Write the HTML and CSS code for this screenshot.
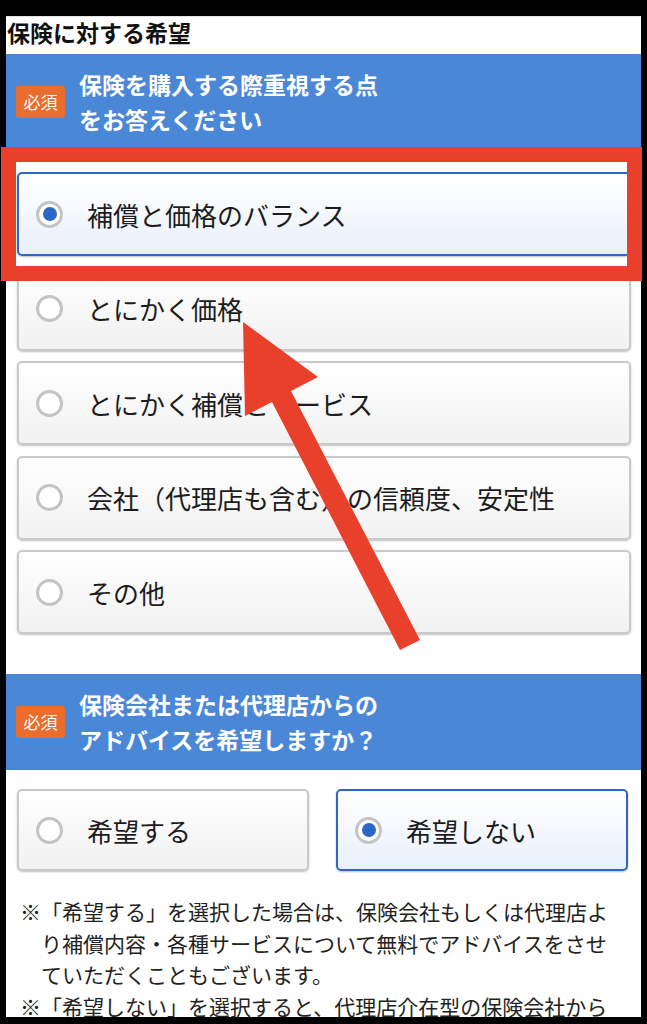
FILE: index.html
```html
<!DOCTYPE html>
<html lang="ja">
<head>
  <meta charset="UTF-8" />
  <meta name="viewport" content="width=device-width, initial-scale=1.0" />
  <title>保険に対する希望</title>
  <link rel="stylesheet" href="styles.css">
</head>
<body>
  <div class="screen">
    <h1 class="page-title">保険に対する希望</h1>

    <div class="question">
      <span class="badge">必須</span>
      <p class="question-text">保険を購入する際重視する点<br>をお答えください</p>
    </div>

    <div class="options">
      <label class="choice selected"><span class="radio"></span>補償と価格のバランス</label>
      <label class="choice"><span class="radio"></span>とにかく価格</label>
      <label class="choice"><span class="radio"></span>とにかく補償とサービス</label>
      <label class="choice"><span class="radio"></span>会社（代理店も含む）の信頼度、安定性</label>
      <label class="choice"><span class="radio"></span>その他</label>
    </div>

    <div class="question second">
      <span class="badge">必須</span>
      <p class="question-text">保険会社または代理店からの<br>アドバイスを希望しますか？</p>
    </div>

    <div class="pair">
      <label class="choice"><span class="radio"></span>希望する</label>
      <label class="choice selected"><span class="radio"></span>希望しない</label>
    </div>

    <div class="notes">
      <div class="note"><span class="mark">※</span><p>「希望する」を選択した場合は、保険会社もしくは代理店よ<br>り補償内容・各種サービスについて無料でアドバイスをさせ<br>ていただくこともございます。</p></div>
      <div class="note"><span class="mark">※</span><p>「希望しない」を選択すると、代理店介在型の保険会社から</p></div>
    </div>
  </div>

  <!-- 注釈（赤枠と矢印） -->
  <svg class="overlay" width="647" height="1024" viewBox="0 0 647 1024">
    <rect x="8.5" y="154.5" width="626" height="119" fill="none" stroke="#e8402a" stroke-width="15" />
    <polygon fill="#e8402a" points="243,322 318,377 291,391 420,640 400,650 272,402 245,416" />
  </svg>
</body>
</html>
```

FILE: styles.css
```css
body {
  margin: 0;
  background: #000;
  font-family: "Noto Sans CJK JP", sans-serif;
  color: #1c1c1c;
}
.screen {
  margin: 16px 6px 0;
  height: 1001px;
  overflow: hidden;
  background: #fff;
  border-top: 1px solid #e4e4e4;
  box-sizing: border-box;
}
.page-title {
  margin: 0;
  padding: 0 1px 7px;
  font-size: 23px;
  line-height: 30px;
  font-weight: bold;
  color: #111;
}
.question {
  display: flex;
  align-items: center;
  height: 96px;
  padding-left: 10px;
  background: #4a87d7;
  color: #fff;
}
.question.second {
  margin-top: 40px;
}
.badge {
  width: 49px;
  height: 32px;
  margin-right: 14px;
  border-radius: 3px;
  background: #ea6d2e;
  font-size: 17px;
  line-height: 32px;
  text-align: center;
  flex-shrink: 0;
}
.question-text {
  margin: 0;
  font-size: 23px;
  line-height: 35px;
  font-weight: bold;
}
.options {
  display: flex;
  flex-direction: column;
  gap: 10.5px;
  padding: 22px 10px 0 11px;
}
.choice {
  display: flex;
  align-items: center;
  height: 84px;
  box-sizing: border-box;
  padding-left: 17px;
  border: 2px solid #c9c9c9;
  border-radius: 5px;
  background: linear-gradient(#ffffff, #f1f1f1);
  box-shadow: 0 1px 2px rgba(0,0,0,0.25);
  font-size: 26px;
  white-space: nowrap;
}
.choice.selected {
  border-color: #2f66c6;
  background: linear-gradient(#ffffff, #e9f0fb);
}
.radio {
  position: relative;
  width: 27px;
  height: 27px;
  margin-right: 24px;
  box-sizing: border-box;
  border: 3px solid #c4c4c4;
  border-radius: 50%;
  background: #fff;
  flex-shrink: 0;
}
.selected .radio::after {
  content: "";
  position: absolute;
  top: 3.5px;
  left: 3.5px;
  width: 14px;
  height: 14px;
  border-radius: 50%;
  background: #2c66c9;
}
.pair {
  display: grid;
  grid-template-columns: 1fr 1fr;
  gap: 27px;
  padding: 19px 13px 0 11px;
}
.pair .choice {
  height: 82px;
}
.notes {
  margin-top: 25px;
  padding-left: 14px;
  font-size: 21px;
  line-height: 31.5px;
  color: #222;
}
.note {
  display: flex;
  white-space: nowrap;
}
.note .mark {
  width: 21px;
  flex-shrink: 0;
}
.note p {
  margin: 0;
}
.overlay {
  position: absolute;
  top: 0;
  left: 0;
  pointer-events: none;
}
```
